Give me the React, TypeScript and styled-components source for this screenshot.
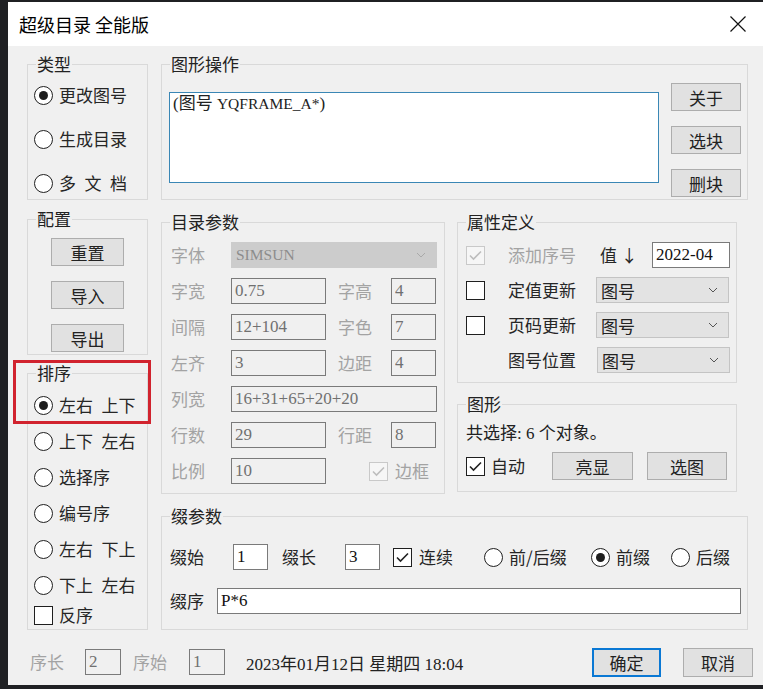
import React from 'react'
import styled, { createGlobalStyle, css } from 'styled-components'

const CJK = `"Noto Sans CJK SC", "Noto Sans", sans-serif`
const MIX = `"Liberation Serif", "Noto Sans CJK SC", serif`

const GlobalStyle = createGlobalStyle`
  html, body {
    margin: 0;
    padding: 0;
    background: #1f2023;
  }
  body {
    font-family: ${MIX};
  }
`

const Screen = styled.div`
  width: 763px;
  height: 689px;
  box-sizing: border-box;
  padding: 2px 0 0 8px;
  background: #1f2023;
  overflow: hidden;
`

const Dialog = styled.div`
  position: relative;
  width: 755px;
  height: 683px;
  background: #f0f0f0;
  display: flex;
  flex-direction: column;
`

const TitleBar = styled.div`
  height: 44px;
  flex-shrink: 0;
  background: #ffffff;
  display: flex;
  align-items: center;
  justify-content: space-between;
  padding: 0 17px 0 11px;
  font-family: ${CJK};
  font-size: 18px;
  color: #000;
`

const Body = styled.div`
  display: grid;
  grid-template-columns: 121px 587px;
  column-gap: 13px;
  padding: 8px 0 0 19px;
  align-content: start;
`

const Column = styled.div`
  display: flex;
  flex-direction: column;
`

const MiddleRow = styled.div`
  display: flex;
  gap: 12px;
  margin-top: 12px;
`

const Group = styled.fieldset<{ $h: number; $w?: number; $mt?: number }>`
  margin: ${({ $mt }) => $mt || 0}px 0 0 0;
  padding: 0;
  border: 1px solid #d9d9d9;
  height: ${({ $h }) => $h}px;
  width: ${({ $w }) => ($w ? `${$w}px` : 'auto')};
  box-sizing: border-box;
  min-width: 0;
`

const Legend = styled.legend`
  margin-left: 8px;
  padding: 0 1px;
  font-family: ${CJK};
  font-size: 17px;
  line-height: 20px;
  color: #222;
`

const Text = styled.span<{ $w?: number; $off?: boolean; $ml?: number }>`
  font-family: ${CJK};
  font-size: 17px;
  line-height: 20px;
  white-space: nowrap;
  flex-shrink: 0;
  color: ${({ $off }) => ($off ? '#a3a3a3' : '#262626')};
  ${({ $w }) => $w && css`width: ${$w}px;`}
  ${({ $ml }) => $ml && css`margin-left: ${$ml}px;`}
`

const Field = styled.input<{ $w: number; $off?: boolean; $ml?: number }>`
  width: ${({ $w }) => $w}px;
  height: 26px;
  box-sizing: border-box;
  margin: 0 0 0 ${({ $ml }) => $ml || 0}px;
  padding: 0 3px;
  border: 1px solid #7a7a7a;
  border-radius: 0;
  outline: none;
  flex-shrink: 0;
  font-family: ${MIX};
  font-size: 17px;
  background: ${({ $off }) => ($off ? '#f0f0f0' : '#ffffff')};
  color: ${({ $off }) => ($off ? '#707070' : '#111')};
`

const SelectBox = styled.div<{ $w: number; $off?: boolean }>`
  width: ${({ $w }) => $w}px;
  height: 26px;
  box-sizing: border-box;
  display: flex;
  align-items: center;
  justify-content: space-between;
  padding: 0 10px 0 4px;
  flex-shrink: 0;
  border: 1px solid ${({ $off }) => ($off ? '#cccccc' : '#c4c4c4')};
  background: ${({ $off }) => ($off ? '#cccccc' : '#e3e3e3')};
  color: ${({ $off }) => ($off ? '#8c8c8c' : '#222')};
  font-family: ${MIX};
  font-size: 17px;
`

const Button = styled.button<{ $w: number; $h?: number; $primary?: boolean; $ml?: number }>`
  width: ${({ $w }) => $w}px;
  height: ${({ $h }) => $h || 28}px;
  margin: 0 0 0 ${({ $ml }) => $ml || 0}px;
  padding: 0;
  flex-shrink: 0;
  box-sizing: border-box;
  background: #e1e1e1;
  border: ${({ $primary }) => ($primary ? '2px solid #0a78d4' : '1px solid #adadad')};
  border-radius: 0;
  font-family: ${CJK};
  font-size: 17px;
  color: #222;
`

const RadioMark = styled.span<{ $on?: boolean }>`
  width: 19px;
  height: 19px;
  box-sizing: border-box;
  flex-shrink: 0;
  border-radius: 50%;
  border: 1.3px solid #1f1f1f;
  background: #fff;
  display: flex;
  align-items: center;
  justify-content: center;
  &::after {
    content: '';
    width: 9px;
    height: 9px;
    border-radius: 50%;
    background: ${({ $on }) => ($on ? '#1e1e1e' : 'transparent')};
  }
`

const CheckMark = styled.span<{ $off?: boolean }>`
  width: 19px;
  height: 19px;
  box-sizing: border-box;
  flex-shrink: 0;
  border: 1.3px solid ${({ $off }) => ($off ? '#c9c9c9' : '#1f1f1f')};
  background: ${({ $off }) => ($off ? '#f6f6f6' : '#fff')};
  display: flex;
  align-items: center;
  justify-content: center;
`

const Option = styled.div<{ $h?: number; $w?: number; $ml?: number; $gap?: number }>`
  display: flex;
  align-items: center;
  gap: ${({ $gap }) => $gap ?? 6}px;
  height: ${({ $h }) => $h || 26}px;
  flex-shrink: 0;
  ${({ $w }) => $w && css`width: ${$w}px;`}
  ${({ $ml }) => $ml && css`margin-left: ${$ml}px;`}
`

/* ---- 类型 / 配置 / 排序 ---- */

const TypeList = styled.div`
  display: flex;
  flex-direction: column;
  gap: 14px;
  padding: 6px 0 0 6px;
`

const ConfigList = styled.div`
  display: flex;
  flex-direction: column;
  gap: 15px;
  padding: 9px 0 0 23px;
`

const SortList = styled.div`
  display: flex;
  flex-direction: column;
  padding: 4px 0 0 6px;
`

/* ---- 图形操作 ---- */

const OpsBody = styled.div`
  display: flex;
  align-items: flex-start;
  padding: 0 6px 0 7px;
`

const TextBox = styled.div`
  margin-top: 18px;
  width: 490px;
  height: 91px;
  box-sizing: border-box;
  padding: 1px 3px;
  border: 1px solid #3a87b5;
  background: #fff;
  font-family: ${MIX};
  font-size: 17px;
  line-height: 20px;
  color: #222;
`

const Latin = styled.span`
  font-family: "Liberation Serif", serif;
  font-size: 15.5px;
`

const ButtonStack = styled.div`
  margin: 9px 0 0 12px;
  display: flex;
  flex-direction: column;
  gap: 15px;
`

/* ---- 目录参数 / 属性定义 / 图形 / 缀参数 ---- */

const FormRows = styled.div<{ $pt: number; $pl: number; $gap: number }>`
  display: flex;
  flex-direction: column;
  gap: ${({ $gap }) => $gap}px;
  padding: ${({ $pt }) => $pt}px 0 0 ${({ $pl }) => $pl}px;
`

const Row = styled.div<{ $h?: number }>`
  display: flex;
  align-items: center;
  height: ${({ $h }) => $h || 26}px;
`

const Note = styled.div`
  font-family: ${MIX};
  font-size: 17px;
  line-height: 20px;
  color: #222;
`

const Footer = styled.div`
  grid-column: 1 / -1;
  display: flex;
  align-items: center;
  height: 30px;
  margin: 17px -5px 0 3px;
`

const DateText = styled.div`
  flex: 1;
  margin-left: 21px;
  font-family: ${MIX};
  font-size: 17px;
  color: #222;
  white-space: nowrap;
`

const Annotation = styled.div`
  position: absolute;
  left: 5px;
  top: 358px;
  width: 138px;
  height: 64px;
  box-sizing: border-box;
  border: 3px solid #d1232e;
  pointer-events: none;
`

const Chevron = ({ color }: { color: string }) => (
  <svg width="10" height="6" viewBox="0 0 10 6">
    <polyline points="1,1 5,5 9,1" fill="none" stroke={color} strokeWidth="1" />
  </svg>
)

const Tick = ({ color }: { color: string }) => (
  <svg width="15" height="13" viewBox="0 0 15 13">
    <polyline points="2,6.5 5.5,10 13,2.5" fill="none" stroke={color} strokeWidth="1.6" />
  </svg>
)

const Radio = ({ label, on, w, ml, h }: { label: string; on?: boolean; w?: number; ml?: number; h?: number }) => (
  <Option $w={w} $ml={ml} $h={h}>
    <RadioMark $on={on} />
    <Text>{label}</Text>
  </Option>
)

const Check = ({ label, on, off, w, ml, h, gap }: { label?: string; on?: boolean; off?: boolean; w?: number; ml?: number; h?: number; gap?: number }) => (
  <Option $w={w} $ml={ml} $h={h} $gap={gap}>
    <CheckMark $off={off}>{on && <Tick color={off ? '#bdbdbd' : '#222'} />}</CheckMark>
    {label && <Text $off={off}>{label}</Text>}
  </Option>
)

const Select = ({ value, w, off }: { value: string; w: number; off?: boolean }) => (
  <SelectBox $w={w} $off={off}>
    {off ? <Latin>{value}</Latin> : <span style={{ fontFamily: CJK }}>{value}</span>}
    <Chevron color={off ? '#a9a9a9' : '#555'} />
  </SelectBox>
)

const catalogRows = [
  { a: '字宽', av: '0.75', b: '字高', bv: '4' },
  { a: '间隔', av: '12+104', b: '字色', bv: '7' },
  { a: '左齐', av: '3', b: '边距', bv: '4' },
]

const sortOptions = ['左右\u2002上下', '上下\u2002左右', '选择序', '编号序', '左右\u2002下上', '下上\u2002左右']

const App = () => {
  return (
    <Screen>
      <GlobalStyle />
      <Dialog>
        <TitleBar>
          <span>超级目录 全能版</span>
          <svg width="16" height="16" viewBox="0 0 16 16">
            <path d="M0.5 0.5 L15.5 15.5 M15.5 0.5 L0.5 15.5" stroke="#111" strokeWidth="1.2" fill="none" />
          </svg>
        </TitleBar>

        <Body>
          <Column>
            <Group $h={146}>
              <Legend>类型</Legend>
              <TypeList>
                <Radio label="更改图号" on h={30} />
                <Radio label="生成目录" h={30} />
                <Radio label={'多\u2002文\u2002档'} h={30} />
              </TypeList>
            </Group>

            <Group $h={146} $mt={9}>
              <Legend>配置</Legend>
              <ConfigList>
                <Button $w={73}>重置</Button>
                <Button $w={73}>导入</Button>
                <Button $w={73}>导出</Button>
              </ConfigList>
            </Group>

            <Group $h={267} $mt={8}>
              <Legend>排序</Legend>
              <SortList>
                {sortOptions.map((s, i) => (
                  <Radio key={s} label={s} on={i === 0} h={36} />
                ))}
                <Check label="反序" h={24} />
              </SortList>
            </Group>
          </Column>

          <Column>
            <Group $h={146}>
              <Legend>图形操作</Legend>
              <OpsBody>
                <TextBox>
                  (图号 <Latin>YQFRAME_A*</Latin>)
                </TextBox>
                <ButtonStack>
                  <Button $w={70}>关于</Button>
                  <Button $w={70}>选块</Button>
                  <Button $w={70}>删块</Button>
                </ButtonStack>
              </OpsBody>
            </Group>

            <MiddleRow>
              <Group $h={282} $w={284}>
                <Legend>目录参数</Legend>
                <FormRows $pt={10} $pl={9} $gap={10}>
                  <Row>
                    <Text $off $w={60}>字体</Text>
                    <Select value="SIMSUN" w={206} off />
                  </Row>
                  {catalogRows.map((r) => (
                    <Row key={r.a}>
                      <Text $off $w={60}>{r.a}</Text>
                      <Field $off $w={95} value={r.av} readOnly />
                      <Text $off $w={53} $ml={12}>{r.b}</Text>
                      <Field $off $w={45} value={r.bv} readOnly />
                    </Row>
                  ))}
                  <Row>
                    <Text $off $w={60}>列宽</Text>
                    <Field $off $w={206} value="16+31+65+20+20" readOnly />
                  </Row>
                  <Row>
                    <Text $off $w={60}>行数</Text>
                    <Field $off $w={95} value="29" readOnly />
                    <Text $off $w={53} $ml={12}>行距</Text>
                    <Field $off $w={45} value="8" readOnly />
                  </Row>
                  <Row>
                    <Text $off $w={60}>比例</Text>
                    <Field $off $w={95} value="10" readOnly />
                    <Check label="边框" on off ml={43} gap={7} />
                  </Row>
                </FormRows>
              </Group>

              <Column>
                <Group $h={171} $w={280}>
                  <Legend>属性定义</Legend>
                  <FormRows $pt={10} $pl={8} $gap={9}>
                    <Row>
                      <Check on off w={42} />
                      <Text $off $w={88}>添加序号</Text>
                      <Text $w={52} $ml={4}>值 ↓</Text>
                      <Field $w={78} value="2022-04" readOnly />
                    </Row>
                    <Row>
                      <Check w={42} />
                      <Text $w={88}>定值更新</Text>
                      <Select value="图号" w={133} />
                    </Row>
                    <Row>
                      <Check w={42} />
                      <Text $w={88}>页码更新</Text>
                      <Select value="图号" w={133} />
                    </Row>
                    <Row>
                      <Text $w={89} $ml={42}>图号位置</Text>
                      <Select value="图号" w={133} />
                    </Row>
                  </FormRows>
                </Group>

                <Group $h={98} $w={280} $mt={11}>
                  <Legend>图形</Legend>
                  <FormRows $pt={8} $pl={8} $gap={8}>
                    <Note>
                      <span style={{ fontFamily: CJK }}>共选择</span>: 6 <span style={{ fontFamily: CJK }}>个对象。</span>
                    </Note>
                    <Row $h={28}>
                      <Check label="自动" on w={86} />
                      <Button $w={81}>亮显</Button>
                      <Button $w={80} $ml={14}>选图</Button>
                    </Row>
                  </FormRows>
                </Group>
              </Column>
            </MiddleRow>

            <Group $h={124} $mt={12}>
              <Legend>缀参数</Legend>
              <FormRows $pt={18} $pl={8} $gap={18}>
                <Row>
                  <Text $w={63}>缀始</Text>
                  <Field $w={35} value="1" readOnly />
                  <Text $w={63} $ml={14}>缀长</Text>
                  <Field $w={35} value="3" readOnly />
                  <Check label="连续" on w={91} ml={13} gap={7} />
                  <Radio label="前/后缀" w={107} />
                  <Radio label="前缀" on w={80} />
                  <Radio label="后缀" />
                </Row>
                <Row>
                  <Text $w={47}>缀序</Text>
                  <Field $w={524} value="P*6" readOnly />
                </Row>
              </FormRows>
            </Group>
          </Column>

          <Footer>
            <Text $off $w={55}>序长</Text>
            <Field $off $w={36} value="2" readOnly />
            <Text $off $w={56} $ml={12}>序始</Text>
            <Field $off $w={36} value="1" readOnly />
            <DateText>2023年01月12日 星期四 18:04</DateText>
            <Button $w={69} $h={29} $primary>确定</Button>
            <Button $w={70} $h={29} $ml={22}>取消</Button>
          </Footer>
        </Body>

        <Annotation />
      </Dialog>
    </Screen>
  )
}

export default App
